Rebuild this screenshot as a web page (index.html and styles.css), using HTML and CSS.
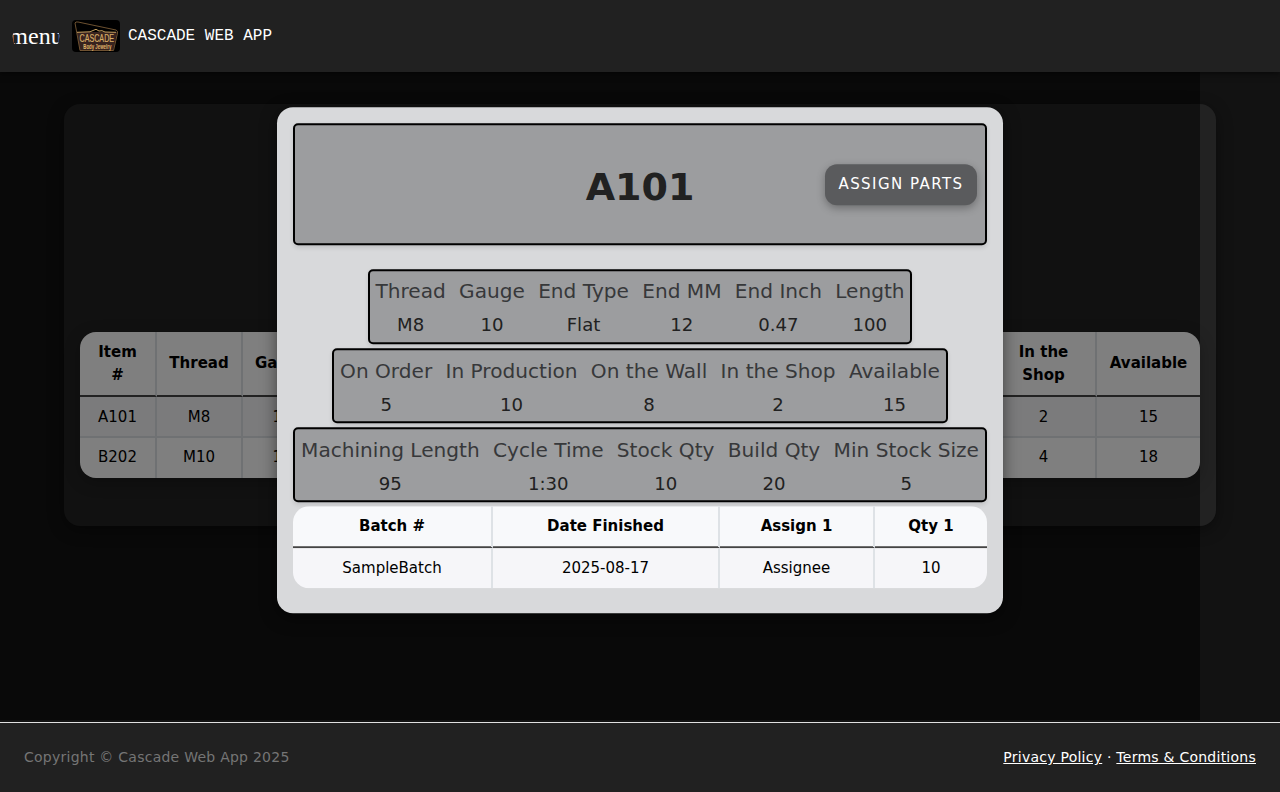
FILE: index.html
```html
<!DOCTYPE html>
<html lang="en">
<head>
<meta charset="utf-8">
<title>Cascade Web App</title>
<link rel="stylesheet" href="styles.css">
</head>
<body>
<header class="topbar">
  <button class="menu-button">menu</button>
  <svg class="logo" viewBox="0 0 48 32" role="img" aria-label="Cascade">
    <rect width="48" height="32" fill="#000"/>
    <path d="M5 12 L45 12 L41 30.5 L8 30.5 Z" fill="#38231f"/>
    <path d="M3 3 Q3.500 1.500 6 2 L44 10 Q46 10.800 45.500 13 L41.500 30.500 L8 30.500 Z" fill="none" stroke="#795a35" stroke-width=".9"/>
    <path d="M5 12.300 L18 11.800 L21 10.500 L24 9.300 L27 11 L30 10.700 L33 12 L44 12.300" fill="none" stroke="#c6a05f" stroke-width="1"/>
    <text x="24.800" y="22" class="logo-name" textLength="34.500" lengthAdjust="spacingAndGlyphs">CASCADE</text>
    <text x="25.300" y="28.800" class="logo-sub" textLength="28" lengthAdjust="spacingAndGlyphs">Body Jewelry</text>
  </svg>
  <span class="app-title">CASCADE WEB APP</span>
</header>
<main class="content">
  <section class="card">
    <table class="data-table inventory">
      <colgroup><col class="c-item"><col class="c-thread"><col class="c-gauge"><col><col><col><col><col><col><col><col class="c-shop"><col class="c-available"></colgroup>
      <thead><tr><th>Item #</th><th>Thread</th><th>Gauge</th><th>End Type</th><th>End MM</th><th>End Inch</th><th>Len</th><th>On Order</th><th>In Prod</th><th>On the Wall</th><th>In the Shop</th><th>Available</th></tr></thead>
      <tbody>
        <tr><td>A101</td><td>M8</td><td>10</td><td>Flat</td><td>12</td><td>0.47</td><td>100</td><td>5</td><td>10</td><td>8</td><td>2</td><td>15</td></tr>
        <tr><td>B202</td><td>M10</td><td>12</td><td>Flat</td><td>14</td><td>0.55</td><td>120</td><td>6</td><td>12</td><td>9</td><td>4</td><td>18</td></tr>
      </tbody>
    </table>
  </section>
  <div class="scrim"></div>
</main>
<footer class="footer">
  <span class="copyright">Copyright © Cascade Web App 2025</span>
  <nav class="links"><a>Privacy Policy</a> · <a>Terms &amp; Conditions</a></nav>
</footer>
<div class="modal">
  <div class="modal-head">
    <h1 class="modal-title">A101</h1>
    <button class="assign">ASSIGN PARTS</button>
  </div>
  <div class="stats">
    <dl class="stat"><dt>Thread</dt><dd>M8</dd></dl>
    <dl class="stat"><dt>Gauge</dt><dd>10</dd></dl>
    <dl class="stat"><dt>End Type</dt><dd>Flat</dd></dl>
    <dl class="stat"><dt>End MM</dt><dd>12</dd></dl>
    <dl class="stat"><dt>End Inch</dt><dd>0.47</dd></dl>
    <dl class="stat"><dt>Length</dt><dd>100</dd></dl>
  </div>
  <div class="stats">
    <dl class="stat"><dt>On Order</dt><dd>5</dd></dl>
    <dl class="stat"><dt>In Production</dt><dd>10</dd></dl>
    <dl class="stat"><dt>On the Wall</dt><dd>8</dd></dl>
    <dl class="stat"><dt>In the Shop</dt><dd>2</dd></dl>
    <dl class="stat"><dt>Available</dt><dd>15</dd></dl>
  </div>
  <div class="stats">
    <dl class="stat"><dt>Machining Length</dt><dd>95</dd></dl>
    <dl class="stat"><dt>Cycle Time</dt><dd>1:30</dd></dl>
    <dl class="stat"><dt>Stock Qty</dt><dd>10</dd></dl>
    <dl class="stat"><dt>Build Qty</dt><dd>20</dd></dl>
    <dl class="stat"><dt>Min Stock Size</dt><dd>5</dd></dl>
  </div>
  <table class="data-table batches">
    <colgroup><col class="c-batch"><col class="c-date"><col class="c-assign"><col></colgroup>
    <thead><tr><th>Batch #</th><th>Date Finished</th><th>Assign 1</th><th>Qty 1</th></tr></thead>
    <tbody><tr><td>SampleBatch</td><td>2025-08-17</td><td>Assignee</td><td>10</td></tr></tbody>
  </table>
</div>
</body>
</html>
```
FILE: styles.css
```css
* { box-sizing: border-box; }
body {
  margin: 0;
  height: 792px;
  display: flex;
  flex-direction: column;
  overflow: hidden;
  background: #121212;
  color: #fff;
  font-family: "DejaVu Sans", sans-serif;
}
.topbar {
  height: 72px;
  flex: none;
  display: flex;
  align-items: center;
  padding: 0 12px;
  background: #212121;
  position: relative;
  z-index: 1;
  box-shadow: 0 2px 6px rgba(0, 0, 0, .5);
}
.menu-button {
  width: 48px;
  height: 48px;
  padding: 0;
  border: 0;
  clip-path: circle(23.3px);
  overflow: hidden;
  display: flex;
  justify-content: center;
  align-items: center;
  background: none;
  color: #fff;
  font: 24px/24px "Liberation Serif", serif;
}
.logo { width: 48px; height: 32px; margin: 0 8px 0 12px; border-radius: 4px; }
.logo-name { font: 11px "Liberation Sans", sans-serif; text-anchor: middle; fill: #d6ad68; stroke: #d6ad68; stroke-width: .2px; }
.logo-sub { font: bold 7px "Liberation Sans", sans-serif; text-anchor: middle; fill: #e2b86c; }
.app-title { font: 16px/18px "Liberation Mono", monospace; }

.content { flex: none; height: 648px; padding: 32px 64px; position: relative; }
.card {
  height: 422px;
  padding: 0 16px 48px;
  display: flex;
  align-items: flex-end;
  border-radius: 16px;
  background: #222;
  box-shadow: 0 4px 16px rgba(0, 0, 0, .4);
}
.scrim { position: absolute; left: 0; top: 0; width: 1200px; height: 648px; background: rgba(0, 0, 0, .5); }

.data-table {
  table-layout: fixed;
  border-collapse: separate;
  border-spacing: 0;
  overflow: hidden;
  border-radius: 16px;
  color: #000;
  font-size: 15px;
  line-height: 22.5px;
  text-align: center;
}
.data-table th, .data-table td { padding: 0 12px; border-right: 2px solid #dee2e6; }
.data-table th { border-bottom: 2px solid #444; }
.data-table th:last-child, .data-table td:last-child { border-right-width: 0; }
.inventory { width: 1120px; background: #fff; box-shadow: 0 4px 16px rgba(0, 0, 0, .25); }
.inventory th { height: 65px; }
.inventory td { height: 41px; }
.inventory tbody tr:first-child td { padding-top: 2px; background: #f6f6f9; border-bottom: 2px solid #dee2e6; }
.inventory tbody tr:last-child td { height: 40px; padding-bottom: 2px; }
.inventory th:nth-child(n+4):nth-child(-n+10) { padding: 0 4px; }
.c-item { width: 77px; }
.c-thread { width: 86px; }
.c-gauge { width: 80px; }
.c-shop { width: 105px; }
.c-available { width: 103px; }

.modal {
  position: absolute;
  left: 50%;
  top: 360px;
  transform: translate(-50%, -50%);
  z-index: 2;
  width: 726px;
  height: 505.5px;
  padding: 16px;
  display: flex;
  flex-direction: column;
  align-items: center;
  gap: 4.5px;
  border-radius: 16px;
  background: #d8d9db;
  box-shadow: 0 4px 16px rgba(0, 0, 0, .5);
}
.modal-head, .stats {
  border: 2px solid #000;
  border-radius: 5px;
  background: #9c9d9f;
  color: #212121;
  box-shadow: 0 2px 4px rgba(0, 0, 0, .1);
}
.modal-head {
  width: 694px;
  height: 121.5px;
  flex: none;
  margin-bottom: 20px;
  padding: 0 8px;
  display: grid;
  grid-template-columns: 1fr auto 1fr;
  align-items: center;
}
.modal-title { margin: 0; padding-top: 7px; grid-column: 2; font-size: 38px; line-height: 46px; }
.assign {
  justify-self: end;
  width: 152px;
  height: 41px;
  margin-top: 1px;
  padding: 0 0 1px 0;
  border: 0;
  border-radius: 12px;
  background: #5a5b5d;
  color: #fff;
  font: 15px "DejaVu Sans", sans-serif;
  letter-spacing: 1.45px;
  box-shadow: 0 3px 8px rgba(0, 0, 0, .3);
}
.stats { flex: none; height: 74.7px; display: flex; }
.stat { margin: 0; padding: 5.4px 6.65px 0; text-align: center; white-space: nowrap; }
.stats .stat:first-child { padding-left: 5.8px; }
.stats .stat:last-child { padding-right: 5.8px; }
.stat dt { font-size: 20.12px; line-height: 30px; color: #37383a; }
.stat dd { margin: 4px 0 0; font-size: 18.1px; line-height: 30px; }
.batches { width: 694px; flex: none; margin-top: -1px; }
.batches th { height: 42px; padding-top: 2px; }
.batches thead { background: #f8f9fb; }
.batches td { height: 40px; padding-top: 2px; background: #f6f6f9; }
.c-batch { width: 200px; }
.c-date { width: 227px; }
.c-assign { width: 155px; }

.footer {
  height: 71px;
  flex: none;
  margin-top: 2px;
  display: flex;
  justify-content: space-between;
  align-items: center;
  padding: 0 24px 2px;
  border-top: 1px solid #e0e0e0;
  background: #212121;
  font-size: 14px;
  letter-spacing: .25px;
}
.copyright { color: #757575; }
.links a { text-decoration: underline; }
```
